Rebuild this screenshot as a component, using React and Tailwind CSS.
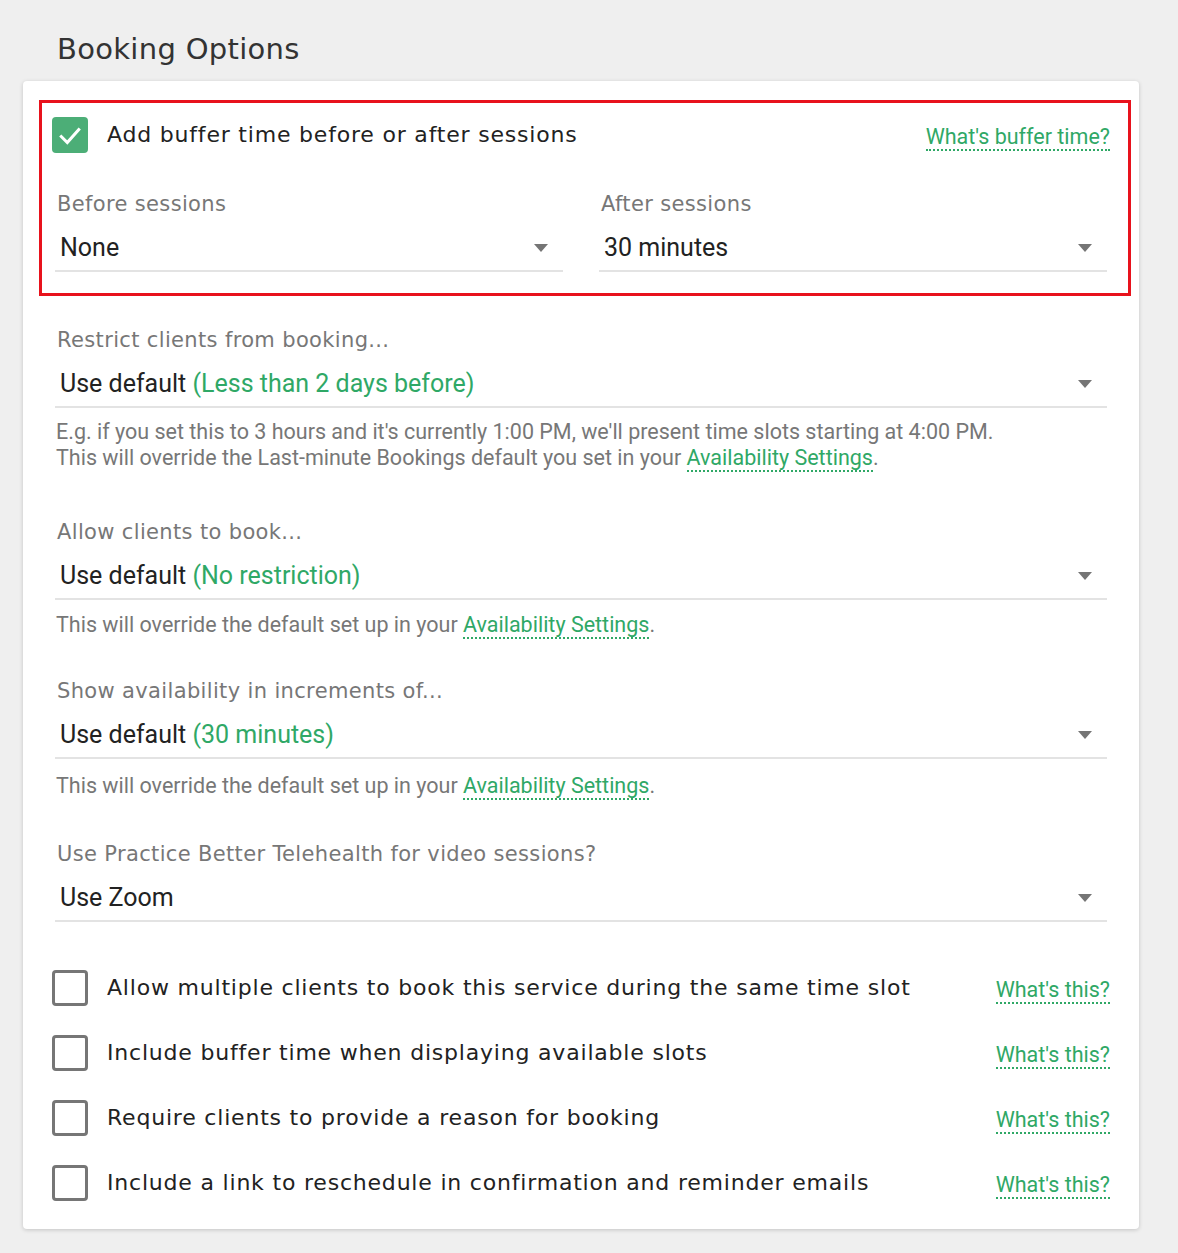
import React from 'react';

const LABEL_FONT = { fontFamily: '"DejaVu Sans", "Open Sans", sans-serif' };
const VALUE_FONT = { fontFamily: 'Roboto, "Liberation Sans", sans-serif' };

function Caret() {
  return (
    <svg width="16" height="8" viewBox="0 0 16 8" className="shrink-0">
      <path d="M1 0 L15 0 L8 8 Z" fill="#757575" />
    </svg>
  );
}

function Help({ children }) {
  return (
    <span className="text-[#2fa866] border-b-2 border-dotted border-[#2fa866]">{children}</span>
  );
}

function SelectField({ label, value, extra, className }) {
  return (
    <div className={className}>
      <div className="text-[21px] leading-[24px] text-[#777] pl-[2px] tracking-[0.35px]" style={LABEL_FONT}>{label}</div>
      <div className="mt-[17px] flex items-center justify-between border-b-2 border-[#e3e3e3] pb-[7px] pl-[5px] pr-[14px]">
        <span className="text-[25px] leading-[30px] text-[#222]" style={VALUE_FONT}>
          {value}
          {extra && <span className="text-[#2fa866]"> {extra}</span>}
        </span>
        <Caret />
      </div>
    </div>
  );
}

function CheckRow({ text, checked }) {
  return (
    <div className="flex items-center justify-between">
      <div className="flex items-center">
        {checked ? (
          <div className="w-[36px] h-[36px] rounded-[4px] bg-[#4cae77] flex items-center justify-center">
            <svg width="26" height="26" viewBox="0 0 24 24">
              <path d="M3 12.5 L9.5 19 L21 6" fill="none" stroke="white" strokeWidth="2.8" />
            </svg>
          </div>
        ) : (
          <div className="w-[36px] h-[36px] rounded-[4px] border-[3px] border-[#767676] bg-white" />
        )}
        <span className="ml-[19px] text-[22px] leading-[28px] text-[#222] tracking-[0.8px]" style={LABEL_FONT}>{text}</span>
      </div>
      <span className="text-[21.5px] leading-[28px] pt-[3px]" style={VALUE_FONT}>
        <Help>{checked ? "What's buffer time?" : "What's this?"}</Help>
      </span>
    </div>
  );
}

const extraChecks = [
  "Allow multiple clients to book this service during the same time slot",
  "Include buffer time when displaying available slots",
  "Require clients to provide a reason for booking",
  "Include a link to reschedule in confirmation and reminder emails",
];

export default function App() {
  return (
    <div className="min-h-screen bg-[#efefef] pt-[31px]">
      <h1 className="ml-[57px] text-[29px] leading-[36px] text-[#333] tracking-[0.3px]" style={LABEL_FONT}>Booking Options</h1>
      <div className="ml-[23px] mt-[14px] w-[1116px] bg-white rounded-[4px] shadow-[0_1px_4px_rgba(0,0,0,0.18)] px-[32px] pt-[19px] pb-[28px]">
        {/* highlighted section */}
        <div className="ml-[-16px] mr-[-24px] border-[3px] border-[#e8121c] pt-[14px] pl-[10px] pr-[18px] pb-[21px]">
          <CheckRow text="Add buffer time before or after sessions" checked />
          <div className="mt-[39px] pl-[3px] pr-[3px] grid grid-cols-2 gap-[36px]">
            <SelectField label="Before sessions" value="None" />
            <SelectField label="After sessions" value="30 minutes" />
          </div>
        </div>

        <SelectField className="mt-[32px]" label="Restrict clients from booking..." value="Use default" extra="(Less than 2 days before)" />
        <p className="mt-[11px] text-[21.5px] leading-[26px] text-[#777] pl-[1px]" style={VALUE_FONT}>
          E.g. if you set this to 3 hours and it's currently 1:00 PM, we'll present time slots starting at 4:00 PM.<br />
          This will override the Last-minute Bookings default you set in your <Help>Availability Settings</Help>.
        </p>

        <SelectField className="mt-[49px]" label="Allow clients to book..." value="Use default" extra="(No restriction)" />
        <p className="mt-[12px] text-[21.5px] leading-[26px] text-[#777] pl-[1px]" style={VALUE_FONT}>
          This will override the default set up in your <Help>Availability Settings</Help>.
        </p>

        <SelectField className="mt-[41px]" label="Show availability in increments of..." value="Use default" extra="(30 minutes)" />
        <p className="mt-[14px] text-[21.5px] leading-[26px] text-[#777] pl-[1px]" style={VALUE_FONT}>
          This will override the default set up in your <Help>Availability Settings</Help>.
        </p>

        <SelectField className="mt-[43px]" label="Use Practice Better Telehealth for video sessions?" value="Use Zoom" />

        <div className="mt-[48px] flex flex-col gap-[29px] ml-[-3px] mr-[-3px]">
          {extraChecks.map((t, i) => (
            <CheckRow key={i} text={t} />
          ))}
        </div>
      </div>
    </div>
  );
}
